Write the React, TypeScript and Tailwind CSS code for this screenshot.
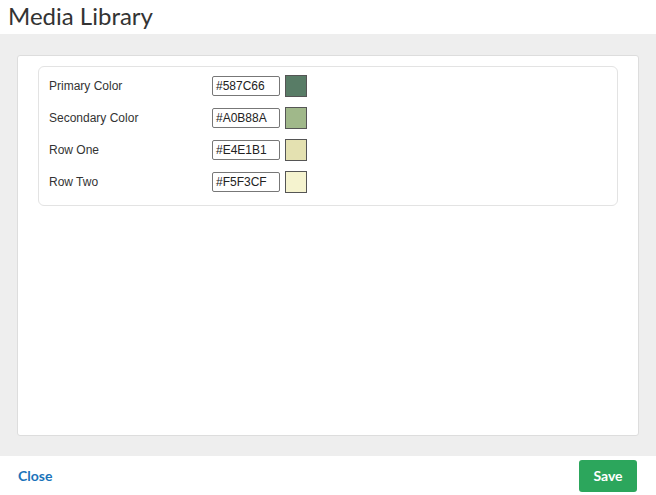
import React from "react";

const rows = [
  { label: "Primary Color", value: "#587C66" },
  { label: "Secondary Color", value: "#A0B88A" },
  { label: "Row One", value: "#E4E1B1" },
  { label: "Row Two", value: "#F5F3CF" },
];

export default function App() {
  return (
    <div className="w-[656px] h-[495px] flex flex-col bg-white overflow-hidden">
      <div className="h-[34px] flex items-center pl-[8px] shrink-0">
        <h1 className="text-[24px] leading-none text-[#333] font-['Lato',sans-serif] -mt-[3px]">
          Media Library
        </h1>
      </div>
      <div className="h-[422px] bg-[#eeeeee] pt-[21px] pb-[20px] px-[17px] shrink-0 flex">
        <div className="flex-1 bg-white border border-[#dddddd] rounded-[3px] pt-[10px] px-[20px]">
          <div className="border border-[#e3e3e3] rounded-[6px] pt-[8px] pb-[12px] pl-[10px] flex flex-col gap-[10px]">
            {rows.map((r) => (
              <div key={r.label} className="flex items-center h-[22px] font-['Liberation_Sans',Arial,sans-serif] text-[12px] text-[#333]">
                <div className="w-[163px]">{r.label}</div>
                <div className="w-[68px] h-[20px] border border-[#777] rounded-[2px] px-[3px] flex items-center text-[#222]">
                  {r.value}
                </div>
                <div
                  className="ml-[5px] w-[22px] h-[22px] border border-[#555]"
                  style={{ backgroundColor: r.value }}
                />
              </div>
            ))}
          </div>
        </div>
      </div>
      <div className="flex-1 flex items-center justify-between pl-[18px] pr-[19px] font-['Lato',sans-serif]">
        <span className="text-[14px] font-bold text-[#1a73ba]">Close</span>
        <button className="w-[58px] h-[32px] bg-[#2ca65c] rounded-[3px] text-white text-[14px] font-bold">
          Save
        </button>
      </div>
    </div>
  );
}
